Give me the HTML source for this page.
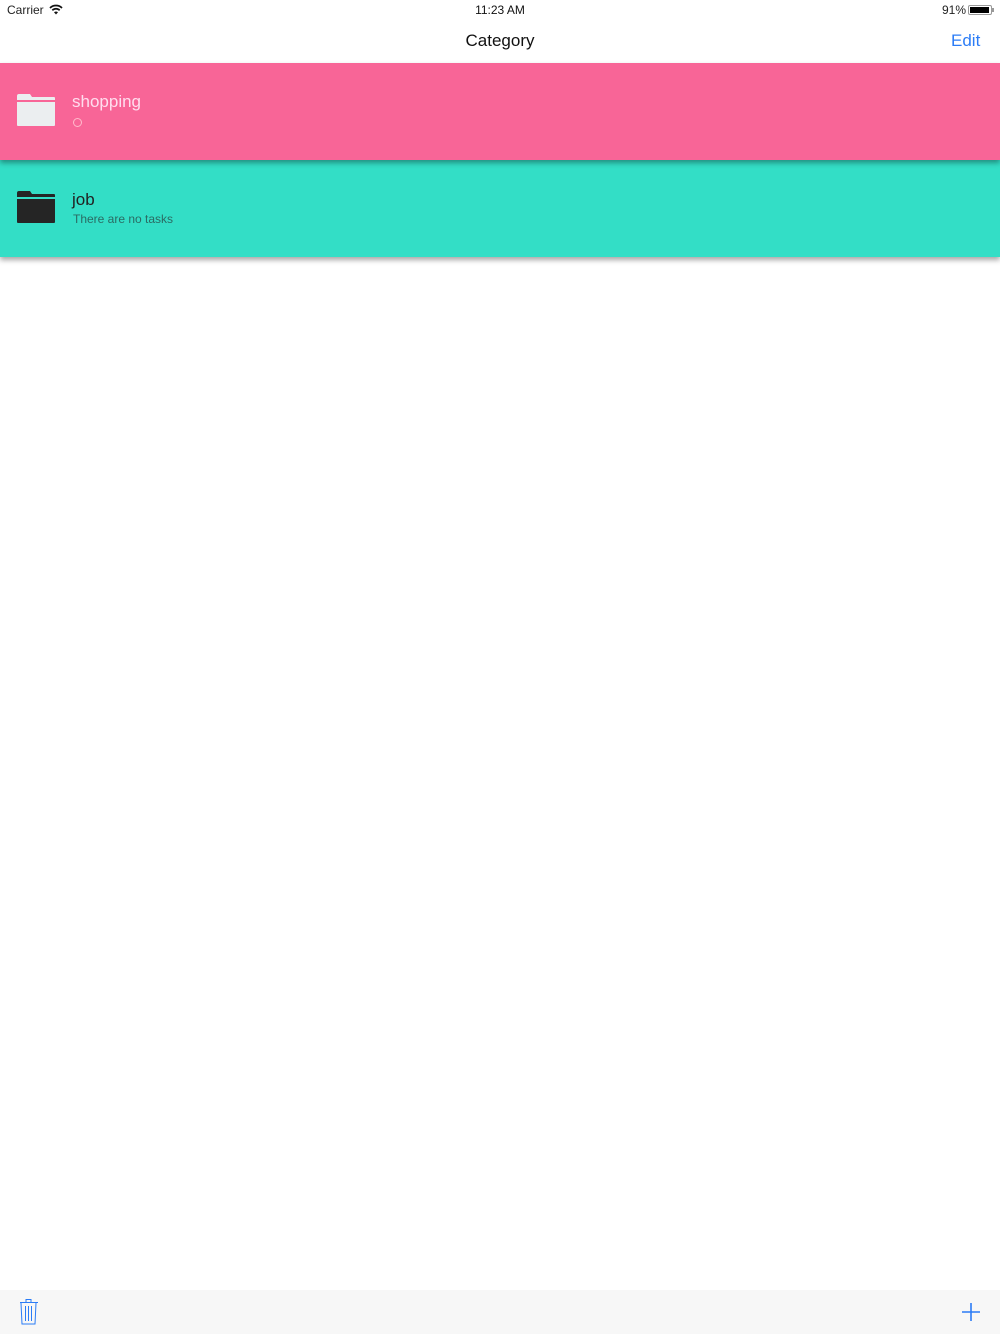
<!DOCTYPE html>
<html><head><meta charset="utf-8"><style>
*{margin:0;padding:0;box-sizing:border-box}
body{width:1000px;height:1334px;background:#fff;font-family:"Liberation Sans",sans-serif;position:relative;overflow:hidden}
.abs{position:absolute}
.row{position:absolute;left:0;width:1000px;height:97px}
</style></head><body>
<div class="abs" style="left:7px;top:3px;font-size:12px;color:#222">Carrier</div>
<svg class="abs" style="left:49px;top:4px" width="14" height="11" viewBox="0 0 14 11"><path d="M1 4 A8.5 8.5 0 0 1 13 4" stroke="#111" stroke-width="1.7" fill="none"/><path d="M3.3 6.3 A5.2 5.2 0 0 1 10.7 6.3" stroke="#111" stroke-width="1.7" fill="none"/><path d="M7 10.5 L5 8.3 A2.9 2.9 0 0 1 9 8.3Z" fill="#111"/></svg>
<div class="abs" style="left:0;width:1000px;top:3px;text-align:center;font-size:12px;color:#111">11:23 AM</div>
<div class="abs" style="left:942px;top:3px;font-size:12px;color:#222">91%</div>
<div class="abs" style="left:968px;top:5px;width:24px;height:10px;border:1px solid #999;border-radius:2px;padding:1px"><div style="width:19px;height:6px;background:#000"></div></div>
<div class="abs" style="left:992px;top:8px;width:2px;height:4px;background:#999"></div>
<div class="abs" style="left:0;width:1000px;top:31px;text-align:center;font-size:17px;color:#111">Category</div>
<div class="abs" style="left:951px;top:31px;font-size:17px;color:#2b7cf6">Edit</div>

<div class="row" style="top:63px;background:#f86597;box-shadow:0 3px 5px rgba(0,0,0,.35);z-index:2">
<svg class="abs" style="left:17px;top:31px" width="39" height="33" viewBox="0 0 39 33"><path d="M0 2 Q0 0 2 0 H13 L15 3 H37 Q38 3 38 4 V6 H0Z M0 8 H38 V31 Q38 32 37 32 H1 Q0 32 0 31Z" fill="#ebeef0"/></svg>
<div class="abs" style="left:72px;top:29px;font-size:17px;color:#fde">shopping</div>
<div class="abs" style="left:73px;top:55px;width:9px;height:9px;border:1.3px solid #fbc;border-radius:50%"></div>
</div>
<div class="row" style="top:160px;background:#33dec6;box-shadow:0 3px 5px rgba(0,0,0,.35);z-index:1">
<svg class="abs" style="left:17px;top:31px" width="39" height="33" viewBox="0 0 39 33"><path d="M0 2 Q0 0 2 0 H13 L15 3 H37 Q38 3 38 4 V6 H0Z M0 8 H38 V31 Q38 32 37 32 H1 Q0 32 0 31Z" fill="#252525"/></svg>
<div class="abs" style="left:72px;top:30px;font-size:17px;color:#222">job</div>
<div class="abs" style="left:73px;top:52px;font-size:12px;color:#2b6b63">There are no tasks</div>
</div>

<div class="abs" style="left:0;top:1290px;width:1000px;height:44px;background:#f7f7f7"></div>
<svg class="abs" style="left:19px;top:1299px" width="20" height="26" viewBox="0 0 20 26"><g stroke="#2b7cf6" stroke-width="1" fill="none"><rect x="7" y="0.5" width="5" height="3"/><path d="M1 3.5 H19 M2 4 L3 25 H16 L17 4 M6.5 7 V22 M9.5 7 V22 M12.5 7 V22"/></g></svg>
<svg class="abs" style="left:961px;top:1302px" width="20" height="20" viewBox="0 0 20 20"><path d="M10 1 V19 M1 10 H19" stroke="#2b7cf6" stroke-width="1.6"/></svg>
</body></html>
